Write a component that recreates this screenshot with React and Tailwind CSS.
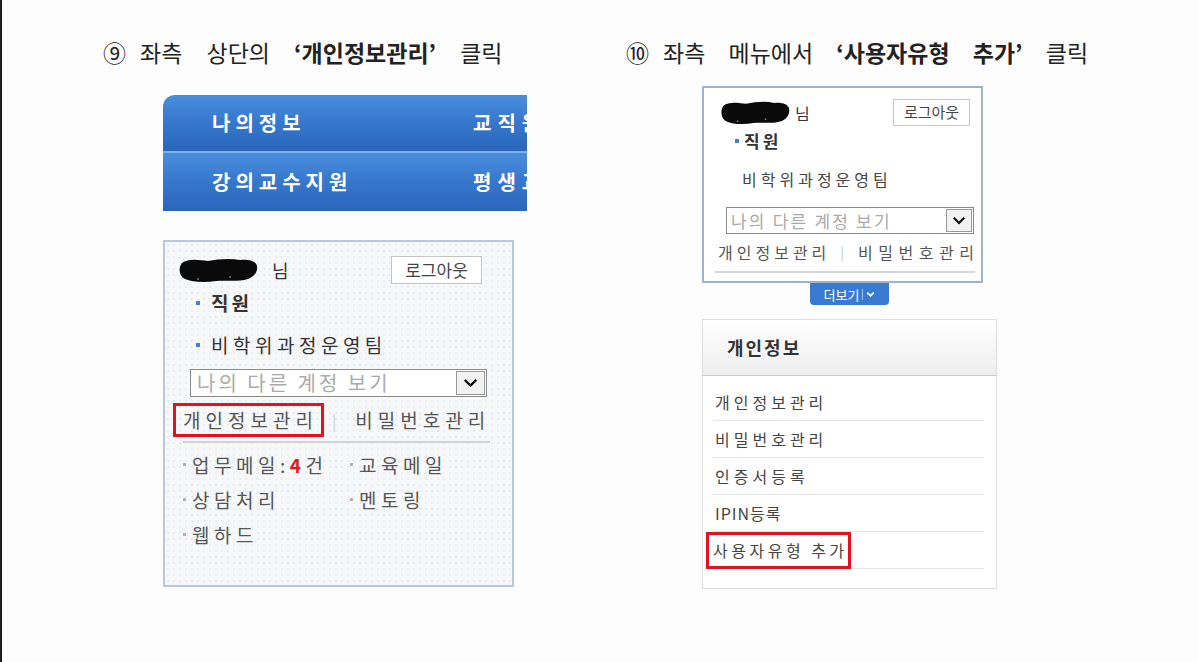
import React from 'react'

const font = { fontFamily: '"Noto Sans CJK KR", "Noto Sans", sans-serif' }

// redacted name smear
const Blob = ({ className }) => (
  <svg className={className} viewBox="0 0 80 26" preserveAspectRatio="none">
    <path
      d="M4 6 C10 1 22 3 30 4 C40 2 52 1 62 3 C70 2 78 4 79 9 C80 15 76 20 70 22 C60 25 48 23 38 24 C26 26 14 25 7 22 C1 19 0 11 4 6 Z"
      fill="#0a0a0a"
    />
    <circle cx="20" cy="22" r="1" fill="#777" />
    <circle cx="52" cy="20" r="1" fill="#777" />
  </svg>
)

const Chevron = ({ className }) => (
  <svg className={className} viewBox="0 0 12 8" fill="none">
    <path d="M1.5 1.5 L6 6 L10.5 1.5" stroke="#111" strokeWidth="2.2" strokeLinecap="square" />
  </svg>
)

const Bullet = () => <span className="inline-block w-[4px] h-[4px] bg-[#4b7fc4] shrink-0" />

const Heading = ({ num, pre, bold, spacing }) => (
  <div className={`h-[30px] leading-[30px] text-[23px] text-[#222] whitespace-nowrap ${spacing}`}>
    <span className="inline-block mr-[14px]">{num}</span>
    {pre} <span className="font-bold">&lsquo;{bold}&rsquo;</span> 클릭
  </div>
)

const NavRow = ({ left, right, first }) => (
  <div
    className={`h-[58px] flex items-center bg-gradient-to-b from-[#4a8ddc] via-[#3677cc] to-[#2866bb] ${first ? 'rounded-tl-[12px] border-b-2 border-[#7fb0e8]' : ''}`}
  >
    <span className="ml-[49px] w-[261px] shrink-0 text-white font-bold text-[20px] tracking-[5px]">{left}</span>
    <span className="shrink-0 text-white font-bold text-[20px] tracking-[6px] whitespace-nowrap">{right}</span>
  </div>
)

const MenuItem = ({ children }) => (
  <div className="flex items-center gap-[6px] text-[19px] text-[#555] tracking-[4.5px] leading-none">
    <span className="w-[3px] h-[3px] bg-[#b0b0b0] shrink-0" />
    <span>{children}</span>
  </div>
)

const LeftColumn = () => (
  <div className="w-[523px] shrink-0">
    <Heading num="⑨" pre="좌측 상단의" bold="개인정보관리" spacing="[word-spacing:19px]" />

    <div className="mt-[28px] ml-[60px] w-[364px] overflow-hidden">
      <NavRow first left="나의정보" right="교직원" />
      <NavRow left="강의교수지원" right="평생교" />
    </div>

    <div className="mt-[29px] ml-[60px] w-[351px] h-[347px] border-2 border-[#b9c7d7] bg-[#f7f8fa] bg-[radial-gradient(#e9ecf0_1px,transparent_1px)] bg-[length:6px_6px]">
      <div className="mt-[14px] flex items-center h-[28px]">
        <Blob className="ml-[13px] w-[80px] h-[26px]" />
        <span className="ml-[14px] text-[18px] text-[#333]">님</span>
        <span className="ml-auto mr-[30px] w-[91px] h-[28px] border border-[#c4c4c4] bg-white flex items-center justify-center text-[17px] text-[#444]">
          로그아웃
        </span>
      </div>

      <div className="mt-[7px] h-[24px] flex items-center ml-[31px] gap-[11px]">
        <Bullet />
        <span className="font-bold text-[19px] text-[#333] tracking-[3px]">직원</span>
      </div>

      <div className="mt-[18px] h-[24px] flex items-center ml-[31px] gap-[11px]">
        <Bullet />
        <span className="text-[19px] text-[#333] tracking-[4.5px] whitespace-nowrap">비학위과정운영팀</span>
      </div>

      <div className="mt-[12px] ml-[25px] w-[297px] h-[28px] border border-[#8a8a8a] bg-white flex items-center">
        <span className="ml-[6px] text-[20px] text-[#aaa] tracking-[3px] leading-none whitespace-nowrap">나의 다른 계정 보기</span>
        <span className="ml-auto mr-[1px] w-[29px] h-[24px] border border-[#999] bg-[#f2f2f2] flex items-center justify-center shrink-0">
          <Chevron className="w-[13px] h-[9px]" />
        </span>
      </div>

      <div className="mt-[6px] ml-[8px] h-[34px] flex items-center">
        <span className="h-[34px] w-[151px] shrink-0 border-[3px] border-[#e0141e] flex items-center pl-[7px] text-[19px] text-[#555] tracking-[5px] whitespace-nowrap">
          개인정보관리
        </span>
        <span className="ml-[8px] text-[#ccc] text-[16px]">|</span>
        <span className="ml-[19px] text-[19px] text-[#555] tracking-[5px] whitespace-nowrap">비밀번호관리</span>
      </div>

      <div className="mt-[4px] ml-[18px] w-[307px] h-[2px] bg-[#d2d2d2]" />

      <div className="ml-[18px] mt-[12px] grid grid-cols-[167px_1fr] gap-y-[16px]">
        <MenuItem>
          업무메일:<span className="text-[#e01a1a] font-bold">4</span>건
        </MenuItem>
        <MenuItem>교육메일</MenuItem>
        <MenuItem>상담처리</MenuItem>
        <MenuItem>멘토링</MenuItem>
        <MenuItem>웹하드</MenuItem>
      </div>
    </div>
  </div>
)

const SideLink = ({ children, boxed, tight }) => (
  <div className="h-[37px] border-b border-[#e6e6e6] flex items-center">
    {boxed ? (
      <span className="-ml-[7px] h-[37px] w-[145px] border-[3px] border-[#e0141e] flex items-center pl-[4px] text-[16px] text-[#444] tracking-[3.5px] whitespace-nowrap">
        {children}
      </span>
    ) : (
      <span className={`ml-[2px] text-[16px] text-[#444] whitespace-nowrap ${tight ? 'tracking-[1px]' : 'tracking-[4px]'}`}>
        {children}
      </span>
    )}
  </div>
)

const RightColumn = () => (
  <div className="w-[560px] shrink-0">
    <Heading num="⑩" pre="좌측 메뉴에서" bold="사용자유형 추가" spacing="[word-spacing:18px]" />

    <div className="mt-[19px] ml-[76px] w-[281px] h-[197px] border-2 border-[#9fb3cf] bg-white">
      <div className="mt-[11px] h-[27px] flex items-center">
        <Blob className="ml-[16px] w-[70px] h-[25px]" />
        <span className="ml-[5px] text-[16px] text-[#333]">님</span>
        <span className="ml-auto mr-[11px] w-[77px] h-[27px] border border-[#c8c8c8] bg-white flex items-center justify-center text-[15px] text-[#444]">
          로그아웃
        </span>
      </div>
      <div className="mt-[3px] h-[24px] flex items-center ml-[31px] gap-[5px]">
        <Bullet />
        <span className="font-bold text-[17px] text-[#333] tracking-[3px]">직원</span>
      </div>
      <div className="mt-[14px] h-[24px] flex items-center ml-[38px]">
        <span className="text-[16px] text-[#444] tracking-[4px] whitespace-nowrap">비학위과정운영팀</span>
      </div>
      <div className="mt-[16px] ml-[22px] w-[248px] h-[27px] border border-[#8a8a8a] bg-white flex items-center">
        <span className="ml-[4px] text-[17px] text-[#aaa] tracking-[2.2px] leading-none whitespace-nowrap">나의 다른 계정 보기</span>
        <span className="ml-auto mr-[1px] w-[26px] h-[23px] border border-[#999] bg-[#f2f2f2] flex items-center justify-center shrink-0">
          <Chevron className="w-[12px] h-[8px]" />
        </span>
      </div>
      <div className="mt-[3px] ml-[14px] h-[30px] flex items-center text-[16px] text-[#555] whitespace-nowrap">
        <span className="tracking-[4px]">개인정보관리</span>
        <span className="ml-[10px] text-[#ccc] text-[14px]">|</span>
        <span className="ml-[14px] tracking-[5.5px]">비밀번호관리</span>
      </div>
      <div className="mt-[4px] ml-[11px] w-[260px] h-[2px] bg-[#d6d6d6]" />
    </div>

    <div className="ml-[184px] w-[79px] h-[22px] bg-[#3a7bd2] rounded-b-[4px] flex items-center justify-center gap-[3px] text-white text-[13px] leading-none">
      <span>더보기</span>
      <span className="w-px h-[11px] bg-[#9cc0ee]" />
      <svg className="w-[9px] h-[7px]" viewBox="0 0 10 7" fill="none">
        <path d="M1.5 1.5 L5 5 L8.5 1.5" stroke="#fff" strokeWidth="2" />
      </svg>
    </div>

    <div className="mt-[14px] ml-[76px] w-[295px] h-[270px] border border-[#dedede] bg-white">
      <div className="h-[56px] bg-gradient-to-b from-white to-[#eeeeee] border-b border-[#c9c9c9] flex items-center">
        <span className="ml-[24px] font-bold text-[18px] text-[#333] tracking-[2px]">개인정보</span>
      </div>
      <div className="mt-[8px] ml-[10px] w-[271px]">
        <SideLink>개인정보관리</SideLink>
        <SideLink>비밀번호관리</SideLink>
        <SideLink>인증서등록</SideLink>
        <SideLink tight>IPIN등록</SideLink>
        <SideLink boxed>사용자유형 추가</SideLink>
      </div>
    </div>
  </div>
)

export default function App() {
  return (
    <div style={font} className="w-[1198px] h-[662px] bg-[#fdfdfd] border-l-2 border-[#1e1e1e] overflow-hidden">
      <div className="pt-[37px] pl-[101px] flex">
        <LeftColumn />
        <RightColumn />
      </div>
    </div>
  )
}
